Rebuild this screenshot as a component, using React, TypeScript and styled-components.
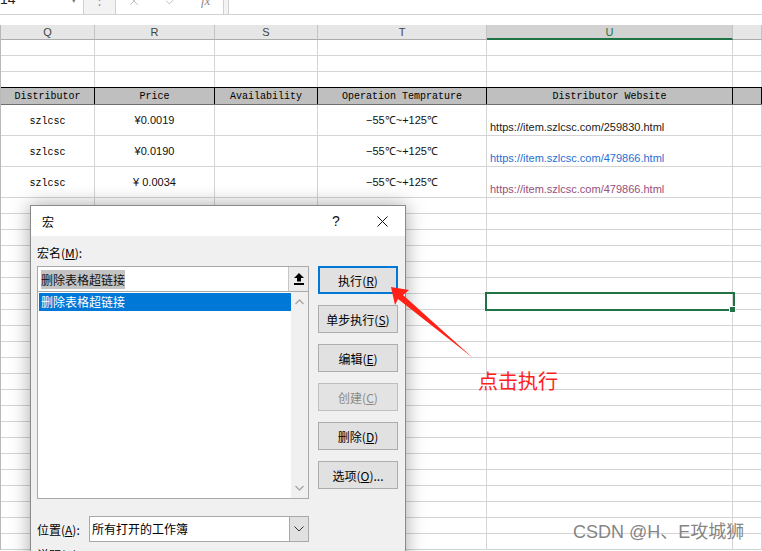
import styled, { createGlobalStyle } from "styled-components";
import { X, Check } from "lucide-react";

const GlobalStyle = createGlobalStyle`
  html, body {
    margin: 0;
    padding: 0;
    background: #fff;
    overflow: hidden;
  }
  body {
    font-family: "Liberation Sans", Arial, sans-serif;
  }
`;

const GRID = "#d4d4d4";
const COLS = [94, 120, 103, 169, 246];
const LETTERS = ["Q", "R", "S", "T", "U"];
const HEADS = ["Distributor", "Price", "Availability", "Operation Temprature", "Distributor Website"];

const rows = [
  { price: "¥0.0019", url: "https://item.szlcsc.com/259830.html", color: "#1b1b1b" },
  { price: "¥0.0190", url: "https://item.szlcsc.com/479866.html", color: "#1f6fd3" },
  { price: "¥ 0.0034", url: "https://item.szlcsc.com/479866.html", color: "#96507c" },
];

const buttons = [
  { label: "执行", key: "R", primary: true },
  { label: "单步执行", key: "S" },
  { label: "编辑", key: "E" },
  { label: "创建", key: "C", disabled: true },
  { label: "删除", key: "D" },
  { label: "选项", key: "O", suffix: "..." },
];

const App = () => {
  return (
    <Page>
      <GlobalStyle />
      <Toolbar>
        <NameBox>
          <span>14</span>
          <Caret>▾</Caret>
        </NameBox>
        <Dots>⋮</Dots>
        <FxBox>
          <X size={14} strokeWidth={1.6} />
          <Check size={14} strokeWidth={1.6} />
          <Fx>fx</Fx>
        </FxBox>
        <FormulaBox />
      </Toolbar>
      <Strip />

      <Sheet>
        <ColHeadRow>
          {COLS.map((w, i) => (
            <ColHead key={i} $w={w} $active={LETTERS[i] === "U"}>
              {LETTERS[i]}
            </ColHead>
          ))}
          <ColHead />
        </ColHeadRow>

        {[0, 1, 2].map((r) => (
          <Row key={r} $h={16} $bottom={r === 2 ? "#000" : GRID}>
            {COLS.map((w, i) => (
              <Cell key={i} $w={w} $line={GRID} />
            ))}
            <Cell $line={GRID} />
          </Row>
        ))}

        <Row $h={17} $bottom="#6e6e6e" $bg="#bfbfbf">
          {COLS.map((w, i) => (
            <Cell key={i} $w={w} $line="#000" $justify="center">
              <MonoText $shift={1}>{HEADS[i]}</MonoText>
            </Cell>
          ))}
          <Cell $line="#000" />
        </Row>

        {rows.map((r, idx) => (
          <Row key={idx} $h={31} $bottom={GRID}>
            <Cell $w={COLS[0]} $line={GRID} $justify="center">
              <MonoText $shift={3}>szlcsc</MonoText>
            </Cell>
            <Cell $w={COLS[1]} $line={GRID} $justify="center">
              <CellText>{r.price}</CellText>
            </Cell>
            <Cell $w={COLS[2]} $line={GRID} />
            <Cell $w={COLS[3]} $line={GRID} $justify="center">
              <CellText>−55℃~+125℃</CellText>
            </Cell>
            <Cell $w={COLS[4]} $line={GRID} $align="flex-end">
              <LinkText $color={r.color}>{r.url}</LinkText>
            </Cell>
            <Cell $line={GRID} />
          </Row>
        ))}

        {Array.from({ length: 22 }).map((_, r) => (
          <Row key={`b${r}`} $h={16} $bottom={GRID}>
            {COLS.map((w, i) => (
              <Cell key={i} $w={w} $line={GRID} $selected={r === 6 && i === 4} />
            ))}
            <Cell $line={GRID} />
          </Row>
        ))}
      </Sheet>

      <Dialog>
        <TitleBar>
          <Title>宏</Title>
          <TitleBtn>?</TitleBtn>
          <TitleBtn>
            <svg width="11" height="11" viewBox="0 0 11 11">
              <path d="M0.5 0.5 L10.5 10.5 M10.5 0.5 L0.5 10.5" stroke="#111" strokeWidth="1" />
            </svg>
          </TitleBtn>
        </TitleBar>
        <Body>
          <LeftCol>
            <FieldLabel>
              宏名(<u>M</u>):
            </FieldLabel>
            <NameField>
              <NameText>
                <SelText>删除表格超链接</SelText>
              </NameText>
              <RefBtn>
                <svg width="10" height="12" viewBox="0 0 10 12">
                  <path d="M5 0 L10 5 L7 5 L7 8.5 L3 8.5 L3 5 L0 5 Z" fill="#000" />
                  <rect x="0" y="10" width="10" height="2" fill="#000" />
                </svg>
              </RefBtn>
            </NameField>
            <MacroList>
              <ListItems>
                <ListItem>删除表格超链接</ListItem>
              </ListItems>
              <ScrollTrack>
                <svg width="9" height="6" viewBox="0 0 9 6">
                  <path d="M0.5 5 L4.5 1 L8.5 5" stroke="#a6a6a6" strokeWidth="1.3" fill="none" />
                </svg>
                <svg width="9" height="6" viewBox="0 0 9 6">
                  <path d="M0.5 1 L4.5 5 L8.5 1" stroke="#a6a6a6" strokeWidth="1.3" fill="none" />
                </svg>
              </ScrollTrack>
            </MacroList>
            <LocationRow>
              <span>
                位置(<u>A</u>):
              </span>
              <SelectBox>
                <SelectText>所有打开的工作簿</SelectText>
                <DropBtn>
                  <svg width="10" height="6" viewBox="0 0 10 6">
                    <path d="M0.5 0.5 L5 5 L9.5 0.5" stroke="#333" strokeWidth="1" fill="none" />
                  </svg>
                </DropBtn>
              </SelectBox>
            </LocationRow>
            <DescLabel>
              说明(<u>D</u>):
            </DescLabel>
          </LeftCol>
          <ButtonCol>
            {buttons.map((b) => (
              <DlgButton key={b.key} $primary={b.primary} $disabled={b.disabled}>
                {b.label}(<u>{b.key}</u>){b.suffix}
              </DlgButton>
            ))}
          </ButtonCol>
        </Body>
      </Dialog>

      <Overlay width="762" height="551" viewBox="0 0 762 551">
        <polygon points="391,287 409,290 403,295 473,358 398,299 395,305" fill="#ff2116" />
      </Overlay>
      <Note>点击执行</Note>
      <Watermark>CSDN @H、E攻城狮</Watermark>
    </Page>
  );
};

const Page = styled.div`
  position: relative;
  width: 762px;
  height: 551px;
  overflow: hidden;
  background: #fff;
`;

const Toolbar = styled.div`
  display: flex;
  align-items: flex-end;
  height: 14px;
  overflow: hidden;
  background: #f3f3f3;
  border-bottom: 1px solid #d2d2d2;
`;

const NameBox = styled.div`
  width: 84px;
  height: 24px;
  flex: none;
  box-sizing: border-box;
  display: flex;
  align-items: flex-end;
  justify-content: space-between;
  padding: 0 6px 8px 0;
  background: #fff;
  border-right: 1px solid #d0d0d0;
  font-size: 14px;
  line-height: 14px;
  color: #222;
`;

const Caret = styled.span`
  font-size: 11px;
  color: #777;
`;

const Dots = styled.div`
  width: 31px;
  flex: none;
  height: 24px;
  display: flex;
  justify-content: center;
  align-items: flex-end;
  padding-bottom: 7px;
  box-sizing: border-box;
  font-size: 13px;
  color: #9a9a9a;
`;

const FxBox = styled.div`
  width: 109px;
  height: 24px;
  flex: none;
  box-sizing: border-box;
  display: flex;
  align-items: flex-end;
  gap: 23px;
  padding: 0 0 6px 11px;
  margin-right: 4px;
  background: #fff;
  border-left: 1px solid #d0d0d0;
  border-right: 1px solid #d0d0d0;
  color: #bdbdbd;
`;

const Fx = styled.span`
  font-family: "Liberation Serif", serif;
  font-style: italic;
  font-size: 13px;
  line-height: 13px;
  color: #8a8a8a;
  margin-bottom: 1px;
`;

const FormulaBox = styled.div`
  flex: 1;
  height: 24px;
  background: #fff;
  border-left: 1px solid #d0d0d0;
`;

const Strip = styled.div`
  height: 10px;
  background: #fff;
`;

const Sheet = styled.div`
  border-left: 1px solid #b8b8b8;
`;

const ColHeadRow = styled.div`
  display: flex;
  height: 15px;
`;

const ColHead = styled.div<{ $w?: number; $active?: boolean }>`
  box-sizing: border-box;
  ${(p) => (p.$w ? `width: ${p.$w}px; flex: none;` : "flex: 1;")}
  display: flex;
  align-items: center;
  justify-content: center;
  background: ${(p) => (p.$active ? "#d2d2d2" : "#e6e6e6")};
  border-right: 1px solid #c4c4c4;
  border-bottom: ${(p) => (p.$active ? "2px solid #217346" : "1px solid #ababab")};
  font-size: 11px;
  color: ${(p) => (p.$active ? "#217346" : "#444")};
`;

const Row = styled.div<{ $h: number; $bottom: string; $bg?: string }>`
  display: flex;
  box-sizing: border-box;
  height: ${(p) => p.$h}px;
  border-bottom: 1px solid ${(p) => p.$bottom};
  background: ${(p) => p.$bg || "#fff"};
`;

const Cell = styled.div<{
  $w?: number;
  $line: string;
  $justify?: string;
  $align?: string;
  $selected?: boolean;
}>`
  position: relative;
  box-sizing: border-box;
  ${(p) => (p.$w ? `width: ${p.$w}px; flex: none;` : "flex: 1;")}
  height: 100%;
  display: flex;
  justify-content: ${(p) => p.$justify || "flex-start"};
  align-items: ${(p) => p.$align || "center"};
  padding: ${(p) => (p.$align === "flex-end" ? "0 0 1px 3px" : "0")};
  border-right: 1px solid ${(p) => p.$line};
  ${(p) =>
    p.$selected &&
    `
    outline: 2px solid #217346;
    outline-offset: 0px;
    z-index: 1;
    &::after {
      content: "";
      position: absolute;
      right: -4px;
      bottom: -4px;
      width: 5px;
      height: 5px;
      background: #217346;
      border: 1px solid #fff;
    }
  `}
`;

const MonoText = styled.span<{ $shift?: number }>`
  font-family: "Liberation Mono", "Courier New", monospace;
  font-size: 10px;
  line-height: 12px;
  padding-top: ${(p) => p.$shift || 0}px;
  color: #000;
  white-space: nowrap;
`;

const CellText = styled.span`
  font-size: 11px;
  line-height: 13px;
  color: #111;
  white-space: nowrap;
`;

const LinkText = styled.span<{ $color: string }>`
  font-size: 11px;
  line-height: 13px;
  color: ${(p) => p.$color};
  white-space: nowrap;
`;

const Dialog = styled.div`
  position: absolute;
  left: 30px;
  top: 205px;
  width: 376px;
  height: 380px;
  box-sizing: border-box;
  border: 1px solid #8a8a8a;
  background: #f0f0f0;
  box-shadow: 0 0 18px rgba(0, 0, 0, 0.35);
  font-family: "Noto Sans CJK SC", "Liberation Sans", sans-serif;
  font-size: 12px;
  color: #000;
  z-index: 2;
`;

const TitleBar = styled.div`
  display: flex;
  align-items: center;
  height: 30px;
  padding-left: 11px;
  background: #fff;
`;

const Title = styled.span`
  flex: 1;
  font-size: 12px;
`;

const TitleBtn = styled.div`
  width: 46px;
  height: 30px;
  display: flex;
  align-items: center;
  justify-content: center;
  font-family: "Liberation Sans", sans-serif;
  font-size: 14px;
  color: #111;
`;

const Body = styled.div`
  display: grid;
  grid-template-columns: 272px 80px;
  column-gap: 9px;
  padding: 10px 0 0 6px;
`;

const LeftCol = styled.div`
  display: flex;
  flex-direction: column;
`;

const FieldLabel = styled.div`
  height: 14px;
  line-height: 14px;
  margin-bottom: 6px;
`;

const NameField = styled.div`
  display: flex;
  height: 26px;
  box-sizing: border-box;
  border: 1px solid #a9a9a9;
  background: #fff;
`;

const NameText = styled.div`
  flex: 1;
  display: flex;
  align-items: center;
  padding-left: 3px;
`;

const SelText = styled.span`
  background: #c3c3c3;
  color: #111;
  line-height: 19px;
`;

const RefBtn = styled.div`
  width: 19px;
  display: flex;
  align-items: center;
  justify-content: center;
  background: #ececec;
  border-left: 1px solid #c6c6c6;
`;

const MacroList = styled.div`
  display: flex;
  height: 207px;
  box-sizing: border-box;
  border: 1px solid #a9a9a9;
  border-top: none;
  background: #fff;
`;

const ListItems = styled.div`
  flex: 1;
  padding: 1px 0 0 1px;
`;

const ListItem = styled.div`
  height: 18px;
  line-height: 18px;
  padding-left: 2px;
  background: #0078d7;
  color: #fff;
`;

const ScrollTrack = styled.div`
  width: 17px;
  display: flex;
  flex-direction: column;
  align-items: center;
  justify-content: space-between;
  padding: 7px 0 7px;
  box-sizing: border-box;
  background: #f0f0f0;
`;

const LocationRow = styled.div`
  display: flex;
  align-items: center;
  justify-content: space-between;
  height: 26px;
  margin-top: 17px;
`;

const SelectBox = styled.div`
  width: 220px;
  height: 26px;
  box-sizing: border-box;
  display: flex;
  border: 1px solid #a9a9a9;
  background: #fff;
`;

const SelectText = styled.div`
  flex: 1;
  padding-left: 2px;
  line-height: 24px;
`;

const DropBtn = styled.div`
  width: 18px;
  display: flex;
  align-items: center;
  justify-content: center;
  background: #e1e1e1;
  border-left: 1px solid #a9a9a9;
`;

const DescLabel = styled.div`
  margin-top: 6px;
  line-height: 14px;
`;

const ButtonCol = styled.div`
  display: flex;
  flex-direction: column;
  gap: 11px;
  padding-top: 20px;
`;

const DlgButton = styled.div<{ $primary?: boolean; $disabled?: boolean }>`
  height: 28px;
  box-sizing: border-box;
  display: flex;
  align-items: center;
  justify-content: center;
  background: ${(p) => (p.$disabled ? "#e3e3e3" : "#e1e1e1")};
  border: ${(p) =>
    p.$primary ? "2px solid #0078d7" : p.$disabled ? "1px solid #bfbfbf" : "1px solid #adadad"};
  color: ${(p) => (p.$disabled ? "#8a8a8a" : "#000")};
  white-space: nowrap;
`;

const Overlay = styled.svg`
  position: absolute;
  left: 0;
  top: 0;
  pointer-events: none;
  z-index: 3;
`;

const Note = styled.div`
  position: absolute;
  left: 478px;
  top: 369px;
  font-family: "Noto Sans CJK SC", sans-serif;
  font-size: 20px;
  line-height: 24px;
  color: #ff1e1e;
  z-index: 3;
`;

const Watermark = styled.div`
  position: absolute;
  left: 573px;
  top: 521px;
  font-family: "Liberation Sans", "Noto Sans CJK SC", sans-serif;
  font-size: 18px;
  line-height: 22px;
  color: rgba(110, 110, 110, 0.85);
  white-space: nowrap;
  z-index: 3;
`;

export default App;
